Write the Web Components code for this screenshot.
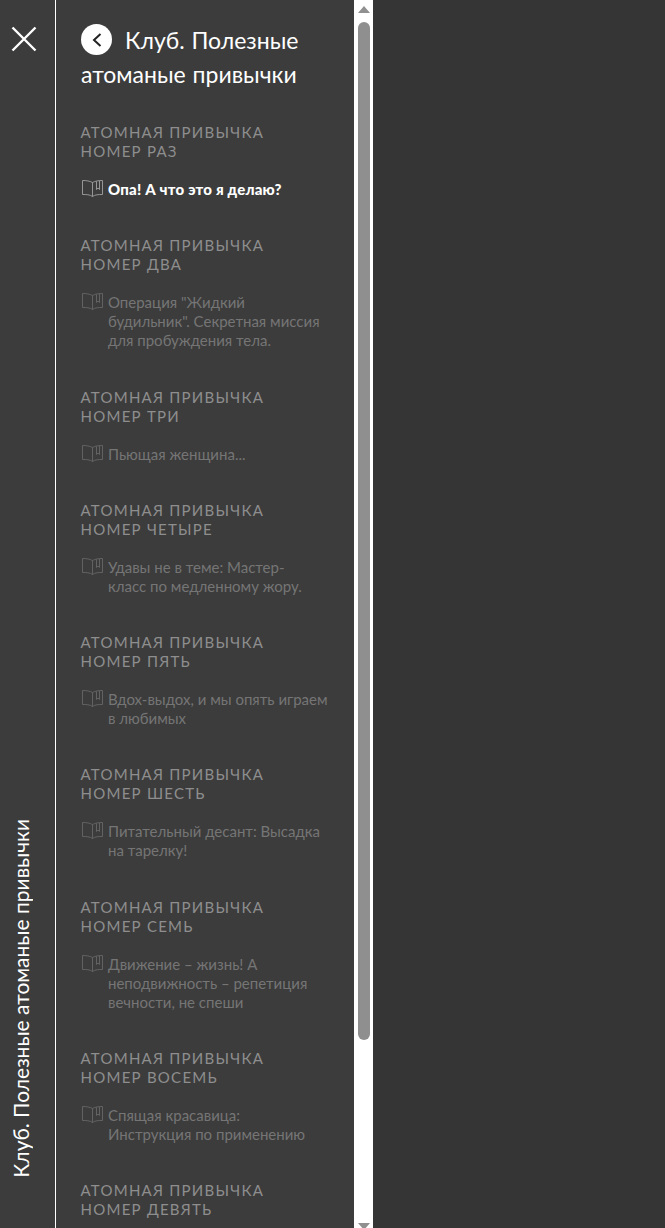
<!DOCTYPE html>
<html lang="ru">
<head>
<meta charset="utf-8">
<title>Клуб</title>
<style>
  html, body { margin: 0; height: 100%; background: #353535; overflow: hidden; }
</style>
</head>
<body>
<course-menu title="Клуб. Полезные атоманые привычки">
  <menu-section number="РАЗ"><menu-lesson active>Опа! А что это я делаю?</menu-lesson></menu-section>
  <menu-section number="ДВА"><menu-lesson>Операция "Жидкий будильник". Секретная миссия для пробуждения тела.</menu-lesson></menu-section>
  <menu-section number="ТРИ"><menu-lesson>Пьющая женщина...</menu-lesson></menu-section>
  <menu-section number="ЧЕТЫРЕ"><menu-lesson>Удавы не в теме: Мастер-<br>класс по медленному жору.</menu-lesson></menu-section>
  <menu-section number="ПЯТЬ"><menu-lesson>Вдох-выдох, и мы опять играем в любимых</menu-lesson></menu-section>
  <menu-section number="ШЕСТЬ"><menu-lesson>Питательный десант: Высадка на тарелку!</menu-lesson></menu-section>
  <menu-section number="СЕМЬ"><menu-lesson>Движение – жизнь! А неподвижность – репетиция вечности, не спеши</menu-lesson></menu-section>
  <menu-section number="ВОСЕМЬ"><menu-lesson>Спящая красавица:<br>Инструкция по применению</menu-lesson></menu-section>
  <menu-section number="ДЕВЯТЬ"></menu-section>
</course-menu>

<script>
(function() {
  const font = '"Lato", "Open Sans", "Noto Sans", sans-serif';

  class MenuLesson extends HTMLElement {
    constructor() {
      super();
      this.attachShadow({ mode: 'open' }).innerHTML = `
        <style>
          :host { display: flex; gap: 4px; font: 400 15px/19px ${font}; color: #757575; }
          :host([active]) { color: #fff; font-weight: 900; letter-spacing: .2px; }
          svg { flex: none; width: 23px; height: 19px; margin-top: -1px; color: #666; }
          :host([active]) svg { color: #a0a0a0; }
        </style>
        <svg viewBox="0 0 23 19" fill="none" stroke="currentColor" stroke-width=".9">
          <path d="M11.5 3.5 C9 2 5 1.5 1.5 1.5 V15.5 C5 15.5 9 15.5 11.5 17.5 C14 15.5 18 15.5 21.5 15.5 V1.5 C18 1.5 14 2 11.5 3.5 Z"/>
          <path d="M11.5 3.5 V17.5"/>
          <path d="M15.5 2.4 V10.5 L17 9 L18.5 10.5 V1.8"/>
        </svg>
        <div><slot></slot></div>`;
    }
  }

  class MenuSection extends HTMLElement {
    constructor() {
      super();
      this.attachShadow({ mode: 'open' }).innerHTML = `
        <style>
          :host { display: block; margin-bottom: 37.25px; }
          .head { font: 400 15px/19px ${font}; letter-spacing: 1.25px; color: #8e8e8e; margin: 0 0 19px -.5px; }
        </style>
        <div class="head">АТОМНАЯ ПРИВЫЧКА<br>НОМЕР <span id="num"></span></div>
        <slot></slot>`;
      this.shadowRoot.getElementById('num').textContent = this.getAttribute('number');
    }
  }

  class CourseMenu extends HTMLElement {
    constructor() {
      super();
      const words = this.getAttribute('title');
      this.attachShadow({ mode: 'open' }).innerHTML = `
        <style>
          :host { display: flex; height: 1228px; width: 373px; overflow: hidden; background: #3c3c3c; }
          .rail { flex: none; width: 48px; padding: 26px 7px 50px 0; height: 1152px; border-right: 1px solid #fff;
                  display: flex; flex-direction: column; align-items: center; justify-content: space-between; }
          .rail svg { width: 26px; height: 26px; display: block; }
          .vertical { writing-mode: vertical-rl; transform: rotate(180deg); color: #fff; font: 400 21px/26px ${font}; white-space: nowrap; margin-right: 6px; }
          .panel { flex: 1; min-width: 0; padding: 23px 24px 0 25px; overflow: hidden; }
          h1 { margin: 0 0 32px; color: #fff; font: 400 23px/34px ${font}; word-spacing: 1px; }
          .back { display: inline-flex; vertical-align: top; align-items: center; justify-content: center; width: 31px; height: 31px;
                  margin: 1px 13px 0 0; border-radius: 50%; background: #fff; }
          .back svg { width: 10px; height: 14px; }
          .bar { flex: none; width: 19px; background: #fff; display: flex; flex-direction: column; align-items: center; }
          .arrow { flex: none; width: 0; height: 0; border: 6.5px solid transparent; border-top-width: 0; border-bottom: 7px solid #909090; margin-top: 6px; }
          .arrow.down { border-bottom-width: 0; border-top: 7px solid #909090; margin: 183px 0 0; }
          .thumb { flex: none; width: 12px; height: 1018px; margin-top: 9px; border-radius: 6px; background: #8f8f8f; }
        </style>
        <div class="rail">
          <svg viewBox="0 0 26 26" fill="none" stroke="#fff" stroke-width="2.4"><path d="M1.5 1.5 L24.5 24.5 M24.5 1.5 L1.5 24.5"/></svg>
          <div class="vertical">${words}</div>
        </div>
        <div class="panel">
          <h1><span class="back"><svg viewBox="0 0 10 14" fill="none" stroke="#222" stroke-width="2"><path d="M8.5 1 L2 7 L8.5 13"/></svg></span>${words}</h1>
          <slot></slot>
        </div>
        <div class="bar"><span class="arrow"></span><span class="thumb"></span><span class="arrow down"></span></div>`;
    }
  }

  customElements.define('menu-lesson', MenuLesson);
  customElements.define('menu-section', MenuSection);
  customElements.define('course-menu', CourseMenu);
})();
</script>
</body>
</html>
